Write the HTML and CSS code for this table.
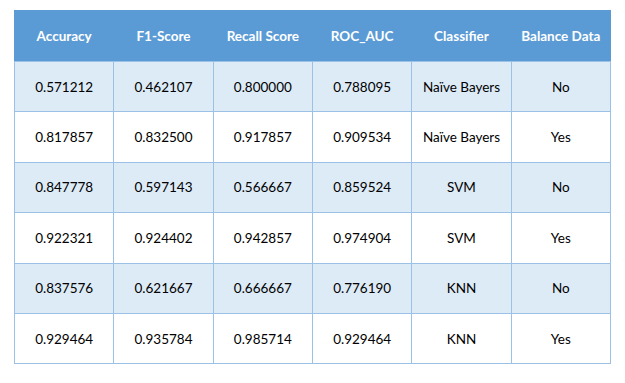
FILE: index.html
```html
<!DOCTYPE html>
<html>
<head>
<meta charset="utf-8">
<link rel="stylesheet" href="styles.css">
</head>
<body>
<table class="results">
  <thead>
    <tr>
      <th>Accuracy</th><th>F1-Score</th><th>Recall Score</th><th>ROC_AUC</th><th>Classifier</th><th>Balance Data</th>
    </tr>
  </thead>
  <tbody>
    <tr class="band"><td>0.571212</td><td>0.462107</td><td>0.800000</td><td>0.788095</td><td>Naïve Bayers</td><td>No</td></tr>
    <tr><td>0.817857</td><td>0.832500</td><td>0.917857</td><td>0.909534</td><td>Naïve Bayers</td><td>Yes</td></tr>
    <tr class="band"><td>0.847778</td><td>0.597143</td><td>0.566667</td><td>0.859524</td><td>SVM</td><td>No</td></tr>
    <tr><td>0.922321</td><td>0.924402</td><td>0.942857</td><td>0.974904</td><td>SVM</td><td>Yes</td></tr>
    <tr class="band"><td>0.837576</td><td>0.621667</td><td>0.666667</td><td>0.776190</td><td>KNN</td><td>No</td></tr>
    <tr><td>0.929464</td><td>0.935784</td><td>0.985714</td><td>0.929464</td><td>KNN</td><td>Yes</td></tr>
  </tbody>
</table>
</body>
</html>
```

FILE: styles.css
```css
html, body {
  margin: 0;
  padding: 0;
  background: #ffffff;
}
body {
  padding: 10px 0 0 14px;
  font-family: Lato, "Open Sans", sans-serif;
  font-size: 13.5px;
  color: #000000;
}
.results {
  border-collapse: collapse;
  table-layout: fixed;
  width: 597px;
}
.results th {
  background: #5b9bd5;
  color: #ffffff;
  font-weight: bold;
  height: 50px;
  padding: 0;
  text-align: center;
  vertical-align: middle;
  border: 1px solid #5b9bd5;
  border-bottom-color: #9bc2e6;
}
.results td {
  height: 49.4px;
  padding: 0;
  text-align: center;
  vertical-align: middle;
  border: 1px solid #9bc2e6;
}
.results tr.band td {
  background: #ddebf7;
}
```
